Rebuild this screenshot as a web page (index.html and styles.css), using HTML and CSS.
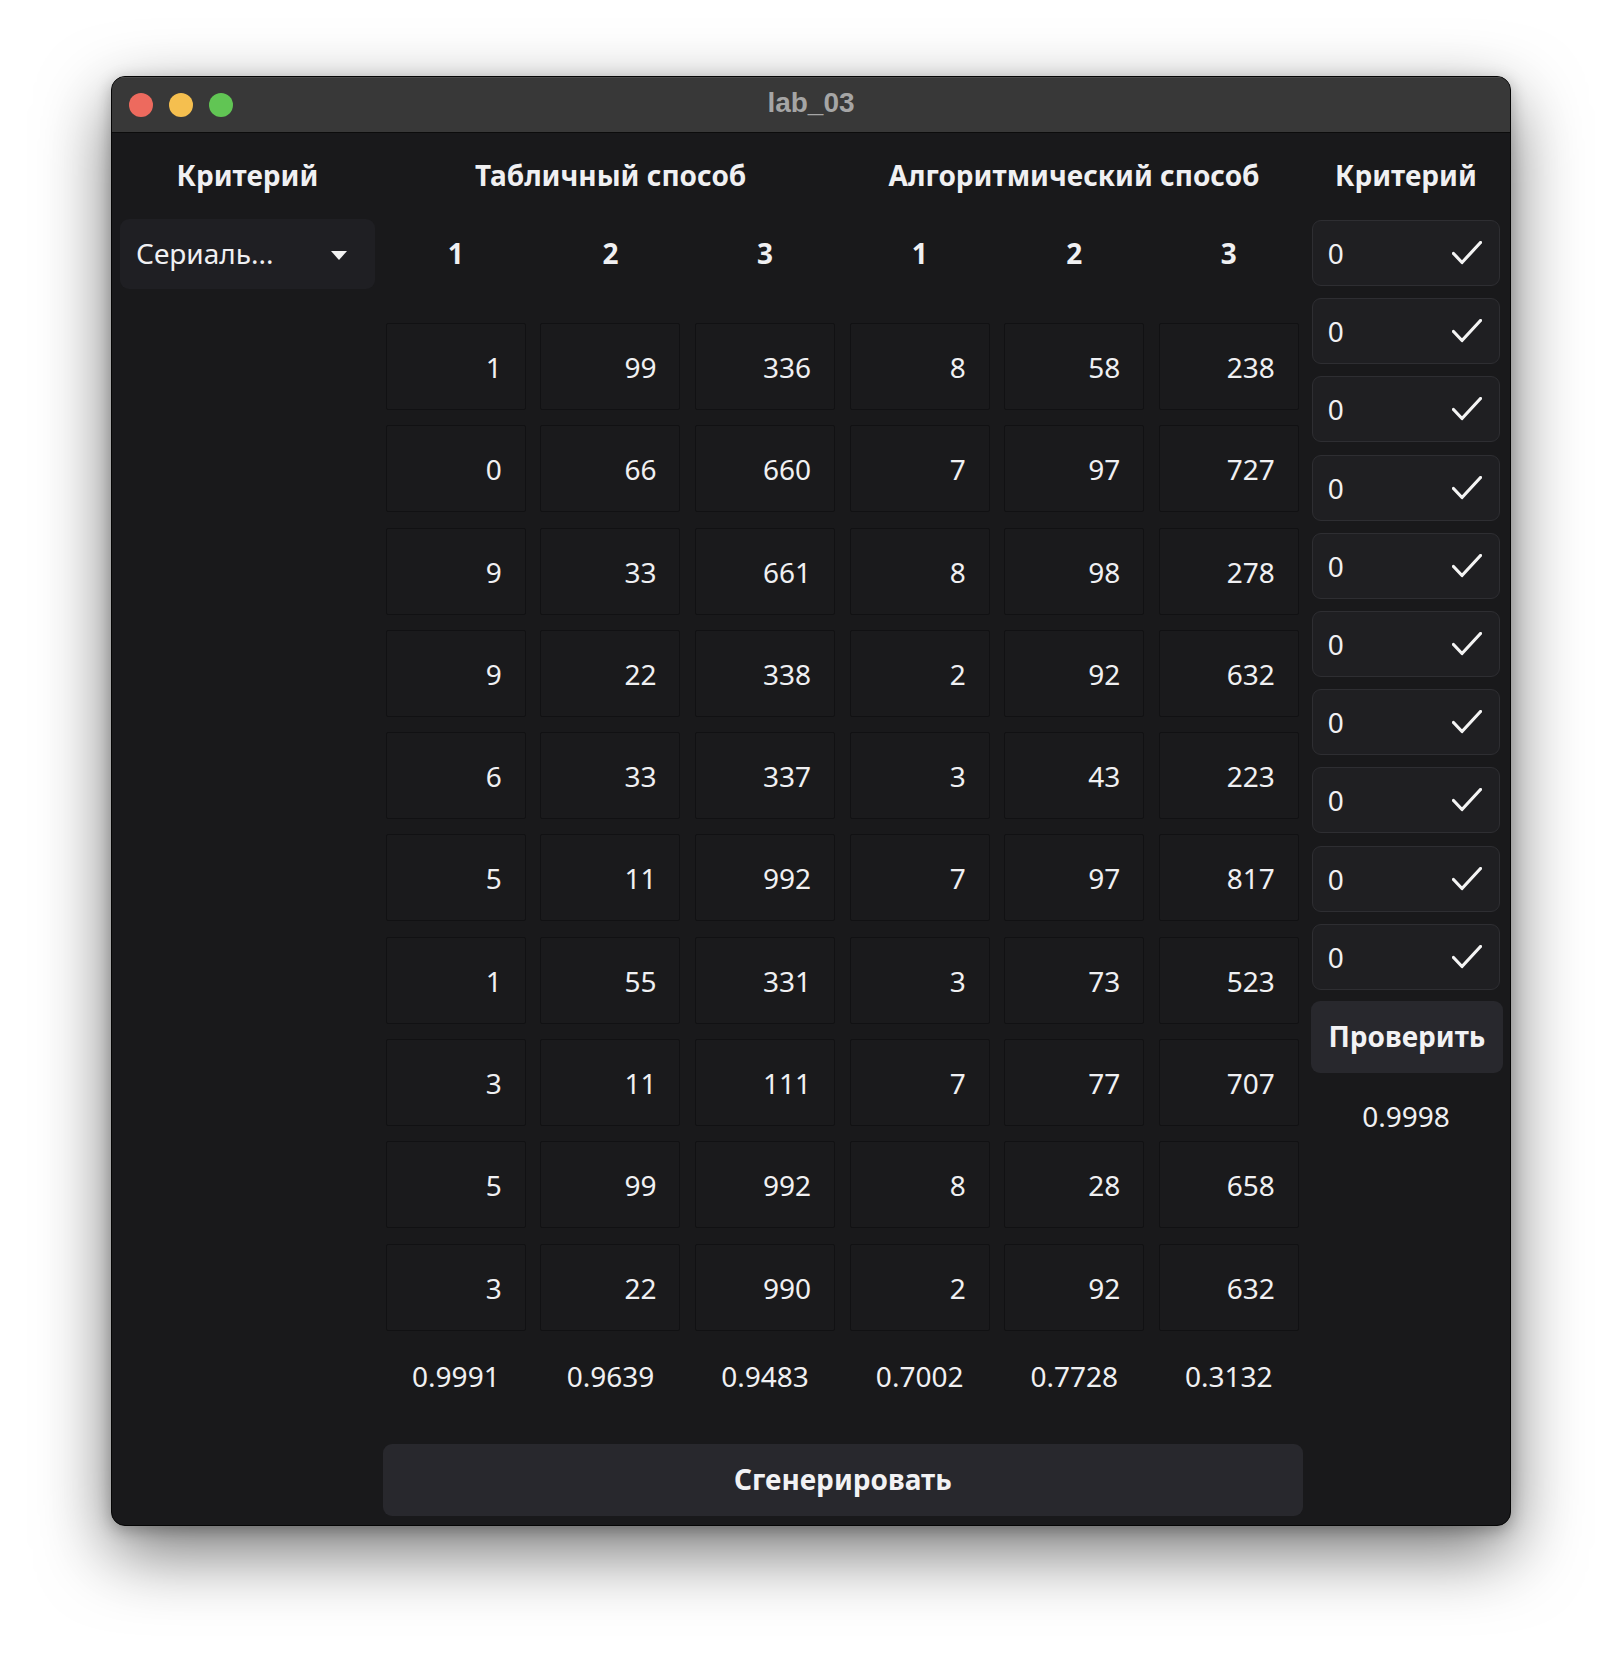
FILE: index.html
```html
<!DOCTYPE html>
<html lang="ru">
<head>
<meta charset="UTF-8" />
<title>lab_03</title>
<link rel="stylesheet" href="styles.css">
</head>
<body>

<div class="window">
  <div class="titlebar">
    <div class="lights">
      <span class="light red"></span>
      <span class="light yellow"></span>
      <span class="light green"></span>
    </div>
    <div class="title">lab_03</div>
  </div>

  <div class="content">
    <!-- left: criterion selector -->
    <div class="col-left">
      <div class="head">Критерий</div>
      <div class="dropdown">
        <span>Сериаль...</span>
        <svg width="16" height="9" viewBox="0 0 16 9"><polygon points="0,0 16,0 8,9" fill="#f2f2f2"/></svg>
      </div>
    </div>

    <!-- middle: the two number tables -->
    <div class="col-mid">
      <div class="head-row">
        <div class="head">Табличный способ</div>
        <div class="head">Алгоритмический способ</div>
      </div>
      <div class="num-row">
        <div>1</div><div>2</div><div>3</div><div>1</div><div>2</div><div>3</div>
      </div>
      <div class="grid">
        <div class="cell">1</div><div class="cell">99</div><div class="cell">336</div><div class="cell">8</div><div class="cell">58</div><div class="cell">238</div>
        <div class="cell">0</div><div class="cell">66</div><div class="cell">660</div><div class="cell">7</div><div class="cell">97</div><div class="cell">727</div>
        <div class="cell">9</div><div class="cell">33</div><div class="cell">661</div><div class="cell">8</div><div class="cell">98</div><div class="cell">278</div>
        <div class="cell">9</div><div class="cell">22</div><div class="cell">338</div><div class="cell">2</div><div class="cell">92</div><div class="cell">632</div>
        <div class="cell">6</div><div class="cell">33</div><div class="cell">337</div><div class="cell">3</div><div class="cell">43</div><div class="cell">223</div>
        <div class="cell">5</div><div class="cell">11</div><div class="cell">992</div><div class="cell">7</div><div class="cell">97</div><div class="cell">817</div>
        <div class="cell">1</div><div class="cell">55</div><div class="cell">331</div><div class="cell">3</div><div class="cell">73</div><div class="cell">523</div>
        <div class="cell">3</div><div class="cell">11</div><div class="cell">111</div><div class="cell">7</div><div class="cell">77</div><div class="cell">707</div>
        <div class="cell">5</div><div class="cell">99</div><div class="cell">992</div><div class="cell">8</div><div class="cell">28</div><div class="cell">658</div>
        <div class="cell">3</div><div class="cell">22</div><div class="cell">990</div><div class="cell">2</div><div class="cell">92</div><div class="cell">632</div>
      </div>
      <div class="val-row">
        <div>0.9991</div><div>0.9639</div><div>0.9483</div><div>0.7002</div><div>0.7728</div><div>0.3132</div>
      </div>
      <button class="btn btn-wide">Сгенерировать</button>
    </div>

    <!-- right: user input -->
    <div class="col-right">
      <div class="head">Критерий</div>
      <div class="inputs">
        <div class="field"><span>0</span><svg class="check" width="30" height="24" viewBox="0 0 30 24"><polyline points="1.5,12.5 10,21.5 28.5,1.5"/></svg></div>
        <div class="field"><span>0</span><svg class="check" width="30" height="24" viewBox="0 0 30 24"><polyline points="1.5,12.5 10,21.5 28.5,1.5"/></svg></div>
        <div class="field"><span>0</span><svg class="check" width="30" height="24" viewBox="0 0 30 24"><polyline points="1.5,12.5 10,21.5 28.5,1.5"/></svg></div>
        <div class="field"><span>0</span><svg class="check" width="30" height="24" viewBox="0 0 30 24"><polyline points="1.5,12.5 10,21.5 28.5,1.5"/></svg></div>
        <div class="field"><span>0</span><svg class="check" width="30" height="24" viewBox="0 0 30 24"><polyline points="1.5,12.5 10,21.5 28.5,1.5"/></svg></div>
        <div class="field"><span>0</span><svg class="check" width="30" height="24" viewBox="0 0 30 24"><polyline points="1.5,12.5 10,21.5 28.5,1.5"/></svg></div>
        <div class="field"><span>0</span><svg class="check" width="30" height="24" viewBox="0 0 30 24"><polyline points="1.5,12.5 10,21.5 28.5,1.5"/></svg></div>
        <div class="field"><span>0</span><svg class="check" width="30" height="24" viewBox="0 0 30 24"><polyline points="1.5,12.5 10,21.5 28.5,1.5"/></svg></div>
        <div class="field"><span>0</span><svg class="check" width="30" height="24" viewBox="0 0 30 24"><polyline points="1.5,12.5 10,21.5 28.5,1.5"/></svg></div>
        <div class="field"><span>0</span><svg class="check" width="30" height="24" viewBox="0 0 30 24"><polyline points="1.5,12.5 10,21.5 28.5,1.5"/></svg></div>
      </div>
      <button class="btn btn-check">Проверить</button>
      <div class="result">0.9998</div>
    </div>
  </div>
</div>

</body>
</html>
```

FILE: styles.css
```css
* {
  box-sizing: border-box;
}
html {
  background: #ffffff;
}
body {
  margin: 0;
  min-height: 1674px;
  padding: 76px 0 0 111px;
  background: #ffffff;
  font-family: 'Noto Sans', 'Open Sans', sans-serif;
  color: #f0f0f2;
}

/* window frame */
.window {
  width: 1400px;
  height: 1450px;
  border-radius: 14px;
  background: #19191b;
  border: 1px solid #050505;
  box-shadow: 0 26px 70px rgba(0,0,0,0.55), 0 4px 16px rgba(0,0,0,0.25);
  overflow: hidden;
  display: flex;
  flex-direction: column;
}
.titlebar {
  height: 56px;
  flex: none;
  background: #383838;
  border-top: 1px solid #4a4a4a;
  border-bottom: 1px solid #0c0c0c;
  display: flex;
  align-items: center;
  position: relative;
}
.lights {
  display: flex;
  gap: 16px;
  padding-left: 17px;
}
.light {
  width: 24px;
  height: 24px;
  border-radius: 50%;
}
.red { background: #ed6a5e; }
.yellow { background: #f5bf4f; }
.green { background: #61c554; }
.title {
  position: absolute;
  left: 0;
  right: 0;
  top: 8px;
  text-align: center;
  font-family: 'Liberation Sans', Arial, sans-serif;
  font-weight: 700;
  font-size: 28px;
  line-height: 34px;
  color: #a5a5a5;
}

/* main content */
.content {
  flex: 1;
  display: flex;
  padding: 18px 10px 9px 8px;
}
.head {
  height: 48px;
  line-height: 48px;
  font-weight: 700;
  font-size: 28px;
  text-align: center;
  white-space: nowrap;
}

.col-left {
  width: 256px;
}
.dropdown {
  margin-top: 20px;
  height: 70px;
  background: #1f1f23;
  border-radius: 9px;
  display: flex;
  align-items: center;
  justify-content: space-between;
  padding: 0 28px 0 16px;
  font-size: 28px;
}
.dropdown span {
  margin-top: -2px;
}
.dropdown svg {
  margin-top: 2px;
}

.col-mid {
  width: 913px;
  margin-left: 11px;
  display: flex;
  flex-direction: column;
}
.head-row {
  display: grid;
  grid-template-columns: 1fr 1fr;
  column-gap: 14px;
}
.num-row,
.val-row,
.grid {
  display: grid;
  grid-template-columns: repeat(6, 140px);
  column-gap: 14.6px;
}
.num-row div {
  height: 108px;
  line-height: 108px;
  text-align: center;
  font-weight: 700;
  font-size: 28px;
}
.grid {
  margin-top: 16px;
  row-gap: 15.3px;
}
.cell {
  height: 87px;
  background: #1a1a1c;
  border: 1px solid #111113;
  border-radius: 2px;
  display: flex;
  align-items: center;
  justify-content: flex-end;
  padding: 1px 23px 0 0;
  font-size: 28px;
}
.val-row div {
  height: 92px;
  line-height: 90px;
  text-align: center;
  font-size: 28px;
}

.btn {
  border: none;
  background: #28282d;
  color: #f2f2f4;
  font-family: inherit;
  font-weight: 700;
  font-size: 28px;
  border-radius: 9px;
  cursor: pointer;
  padding: 0 0 2px;
}
.btn-wide {
  margin: 21px -4px 0 -3px;
  height: 72px;
}

.col-right {
  width: 189px;
  margin-left: 13px;
  display: flex;
  flex-direction: column;
}
.inputs {
  margin-top: 21px;
  display: flex;
  flex-direction: column;
  gap: 12.2px;
}
.field {
  height: 66px;
  background: #1f1f22;
  border: 1.5px solid #2e2e32;
  border-radius: 9px;
  display: flex;
  align-items: center;
  justify-content: space-between;
  padding: 0 17px 0 15px;
  font-size: 28px;
}
.check polyline {
  fill: none;
  stroke: #f4f4f4;
  stroke-width: 3.2;
  stroke-linecap: round;
  stroke-linejoin: round;
}
.btn-check {
  margin: 11px -3px 0 -1px;
  height: 72px;
}
.result {
  height: 90px;
  line-height: 86px;
  text-align: center;
  font-size: 28px;
}
```
